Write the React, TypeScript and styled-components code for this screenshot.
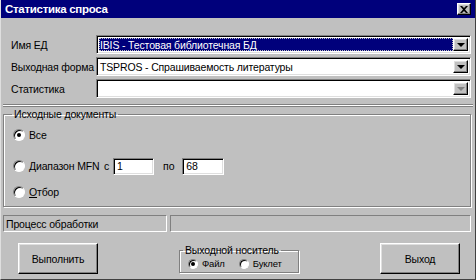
import React from "react";
import styled, { createGlobalStyle, css } from "styled-components";

const GlobalStyle = createGlobalStyle`
  html, body {
    margin: 0;
    padding: 0;
    background: #c0c0c0;
  }
  body {
    font-family: "Liberation Sans", Arial, sans-serif;
    font-size: 10.5px;
    letter-spacing: -0.15px;
    color: #000;
  }
`;

const sunken = css`
  border-top: 1px solid #808080;
  border-left: 1px solid #808080;
  border-right: 1px solid #fff;
  border-bottom: 1px solid #fff;
  box-shadow: inset 1px 1px 0 #000, inset -1px -1px 0 #dfdfdf;
`;

const raised = css`
  border-top: 1px solid #fff;
  border-left: 1px solid #fff;
  border-right: 1px solid #000;
  border-bottom: 1px solid #000;
  box-shadow: inset -1px -1px 0 #808080, inset 1px 1px 0 #dfdfdf;
`;

const Window = styled.div`
  width: 476px;
  height: 280px;
  box-sizing: border-box;
  padding: 0 2px 2px 2px;
  background: #c0c0c0;
  border-left: 1px solid #dfdfdf;
  border-right: 1px solid #404040;
  border-bottom: 1px solid #404040;
  display: flex;
  flex-direction: column;
  overflow: hidden;
`;

const TitleBar = styled.div`
  height: 18px;
  margin: 0 -2px;
  padding: 0 4px 0 4px;
  background: #00007b;
  color: #fff;
  display: flex;
  align-items: center;
  justify-content: space-between;
  font-weight: bold;
  font-size: 11.5px;
  letter-spacing: -0.3px;
`;

const CloseButton = styled.div`
  width: 14px;
  height: 12px;
  box-sizing: border-box;
  background: #c0c0c0;
  ${raised};
  display: flex;
  align-items: center;
  justify-content: center;
`;

const Fields = styled.div`
  display: grid;
  grid-template-columns: 85px 1fr;
  row-gap: 3px;
  align-items: center;
  padding: 17px 2px 7px 8px;
  border-bottom: 1px solid #fff;
  box-shadow: 0 1px 0 #808080, inset 0 -1px 0 #808080;
`;

const Label = styled.span`
  white-space: nowrap;
`;

const ComboBox = styled.div`
  height: 19px;
  box-sizing: border-box;
  background: #fff;
  ${sunken};
  display: flex;
  align-items: stretch;
  padding: 2px;
`;

const ComboText = styled.div<{ $selected?: boolean }>`
  flex: 1;
  display: flex;
  align-items: center;
  padding-left: 1px;
  white-space: nowrap;
  overflow: hidden;
  ${(p) =>
    p.$selected &&
    css`
      background: #00007b;
      color: #fff;
      outline: 1px dotted #c0c0c0;
      outline-offset: -1px;
    `}
`;

const ComboArrow = styled.div<{ $disabled?: boolean }>`
  width: 15px;
  box-sizing: border-box;
  background: #c0c0c0;
  ${raised};
  display: flex;
  align-items: center;
  justify-content: center;
  &::after {
    content: "";
    border-left: 4px solid transparent;
    border-right: 4px solid transparent;
    border-top: 4px solid ${(p) => (p.$disabled ? "#808080" : "#000")};
  }
`;

const GroupBox = styled.fieldset<{ $small?: boolean }>`
  margin: ${(p) => (p.$small ? "0" : "2px 2px 0 0")};
  padding: 0;
  border: 1px solid #808080;
  box-shadow: inset 1px 1px 0 #fff, 1px 1px 0 #fff;
  display: flex;
  flex-direction: ${(p) => (p.$small ? "row" : "column")};
`;

const Legend = styled.legend<{ $small?: boolean }>`
  margin-left: ${(p) => (p.$small ? "3px" : "8px")};
  padding: 0 2px;
  line-height: 13px;
`;

const RadioRow = styled.label<{ $top: number }>`
  display: flex;
  align-items: center;
  height: 18px;
  margin-top: ${(p) => p.$top}px;
  padding-left: 9px;
  gap: 4px;
`;

const RadioCircle = styled.span<{ $checked?: boolean; $size?: number }>`
  width: ${(p) => p.$size ?? 12}px;
  height: ${(p) => p.$size ?? 12}px;
  box-sizing: border-box;
  border-radius: 50%;
  background: #fff;
  border-top: 1px solid #808080;
  border-left: 1px solid #808080;
  border-right: 1px solid #fff;
  border-bottom: 1px solid #fff;
  box-shadow: inset 1px 1px 0 #000;
  display: flex;
  align-items: center;
  justify-content: center;
  flex-shrink: 0;
  &::after {
    content: "";
    width: 4px;
    height: 4px;
    border-radius: 50%;
    background: ${(p) => (p.$checked ? "#000" : "transparent")};
  }
`;

const RadioText = styled.span<{ $width?: number }>`
  white-space: nowrap;
  ${(p) => p.$width && `width: ${p.$width}px;`}
`;

const Underline = styled.span`
  text-decoration: underline;
`;

const SmallLabel = styled.span<{ $left: number }>`
  margin-left: ${(p) => p.$left}px;
`;

const TextInput = styled.div<{ $width: number; $left: number }>`
  width: ${(p) => p.$width}px;
  height: 17px;
  box-sizing: border-box;
  background: #fff;
  ${sunken};
  padding: 0 3px;
  display: flex;
  align-items: center;
  margin-left: ${(p) => p.$left}px;
`;

const StatusRow = styled.div`
  display: flex;
  gap: 3px;
  margin-top: 8px;
  height: 17px;
  padding-right: 2px;
`;

const StatusCell = styled.div<{ $grow?: boolean }>`
  box-sizing: border-box;
  border-top: 1px solid #808080;
  border-left: 1px solid #808080;
  border-right: 1px solid #fff;
  border-bottom: 1px solid #fff;
  width: ${(p) => (p.$grow ? "auto" : "164px")};
  flex: ${(p) => (p.$grow ? 1 : "none")};
  padding-left: 2px;
  display: flex;
  align-items: center;
  white-space: nowrap;
`;

const Footer = styled.div`
  display: flex;
  justify-content: space-between;
  align-items: flex-start;
  padding: 11px 13px 0 15px;
`;

const Button = styled.button`
  width: 80px;
  height: 31px;
  box-sizing: border-box;
  background: #c0c0c0;
  font-family: inherit;
  font-size: 10.5px;
  letter-spacing: -0.15px;
  color: #000;
  ${raised};
  padding: 0;
`;

const MediaBox = styled.div`
  width: 120px;
  margin-top: 1px;
`;

const MediaOption = styled.span<{ $left: number }>`
  display: flex;
  align-items: center;
  gap: 4px;
  margin-left: ${(p) => p.$left}px;
  font-size: 9.5px;
  height: 13px;
  margin-bottom: 2px;
`;

export default function App() {
  return (
    <>
      <GlobalStyle />
      <Window>
        <TitleBar>
          <span>Статистика спроса</span>
          <CloseButton>
            <svg width="8" height="7" viewBox="0 0 8 7">
              <path d="M0 0 L2 0 L4 2 L6 0 L8 0 L5 3.5 L8 7 L6 7 L4 5 L2 7 L0 7 L3 3.5 Z" fill="#000" />
            </svg>
          </CloseButton>
        </TitleBar>

        <Fields>
          <Label>Имя ЕД</Label>
          <ComboBox>
            <ComboText $selected>IBIS - Тестовая библиотечная БД</ComboText>
            <ComboArrow />
          </ComboBox>
          <Label>Выходная форма</Label>
          <ComboBox>
            <ComboText>TSPROS - Спрашиваемость литературы</ComboText>
            <ComboArrow />
          </ComboBox>
          <Label>Статистика</Label>
          <ComboBox>
            <ComboText />
            <ComboArrow $disabled />
          </ComboBox>
        </Fields>

        <GroupBox>
          <Legend>Исходные документы</Legend>
          <RadioRow $top={5}>
            <RadioCircle $checked />
            <RadioText>Все</RadioText>
          </RadioRow>
          <RadioRow $top={13}>
            <RadioCircle />
            <RadioText $width={71}>Диапазон MFN</RadioText>
            <SmallLabel $left={0}>с</SmallLabel>
            <TextInput $width={41} $left={0}>1</TextInput>
            <SmallLabel $left={5}>по</SmallLabel>
            <TextInput $width={42} $left={4}>68</TextInput>
          </RadioRow>
          <RadioRow $top={8}>
            <RadioCircle />
            <RadioText>
              <Underline>О</Underline>тбор
            </RadioText>
          </RadioRow>
          <div style={{ height: 5 }} />
        </GroupBox>

        <StatusRow>
          <StatusCell>Процесс обработки</StatusCell>
          <StatusCell $grow />
        </StatusRow>

        <Footer>
          <Button>Выполнить</Button>
          <MediaBox>
            <GroupBox $small>
              <Legend $small>Выходной носитель</Legend>
              <MediaOption $left={8}>
                <RadioCircle $checked $size={10} />
                Файл
              </MediaOption>
              <MediaOption $left={14}>
                <RadioCircle $size={10} />
                Буклет
              </MediaOption>
            </GroupBox>
          </MediaBox>
          <Button>Выход</Button>
        </Footer>
      </Window>
    </>
  );
}
